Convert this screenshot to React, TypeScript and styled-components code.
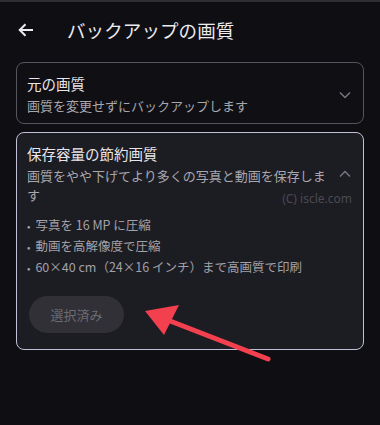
import React from 'react';
import styled, { createGlobalStyle } from 'styled-components';

const GlobalStyle = createGlobalStyle`
  html, body {
    margin: 0;
    padding: 0;
    background: #0e0e13;
  }
  body {
    font-family: "Noto Sans CJK JP", "Noto Sans", Roboto, sans-serif;
    color: #e6e4ea;
  }
`

const bullets = [
  '写真を 16 MP に圧縮',
  '動画を高解像度で圧縮',
  '60×40 cm（24×16 インチ）まで高画質で印刷',
]

const ChevronIcon: React.FC<{ up?: boolean }> = ({ up }) => (
  <svg width="12" height="8" viewBox="0 0 12 8">
    <path
      d={up ? 'M1 6.5 L6 1.5 L11 6.5' : 'M1 1.5 L6 6.5 L11 1.5'}
      fill="none"
      stroke="#77767e"
      strokeWidth="1.5"
    />
  </svg>
)

const App: React.FC = () => {
  return (
    <Page>
      <GlobalStyle />
      <Header>
        <BackButton>
          <svg width="16" height="14" viewBox="0 0 16 14">
            <path d="M15 7 H2 M7.5 1.2 L1.7 7 L7.5 12.8" fill="none" stroke="#ecebef" strokeWidth="2" />
          </svg>
        </BackButton>
        <Title>バックアップの画質</Title>
      </Header>

      <Options>
        <Card>
          <CardHead>
            <CardText>
              <CardTitle>元の画質</CardTitle>
              <CardSub>画質を変更せずにバックアップします</CardSub>
            </CardText>
            <ChevronBox>
              <ChevronIcon />
            </ChevronBox>
          </CardHead>
        </Card>

        <Card $selected>
          <CardHead>
            <CardText>
              <CardTitle>保存容量の節約画質</CardTitle>
              <CardSub>画質をやや下げてより多くの写真と動画を保存します</CardSub>
            </CardText>
            <ChevronBox>
              <ChevronIcon up />
            </ChevronBox>
          </CardHead>
          <Watermark>(C) iscle.com</Watermark>
          <BulletList>
            {bullets.map((b) => (
              <Bullet key={b}>{b}</Bullet>
            ))}
          </BulletList>
          <SelectedButton disabled>選択済み</SelectedButton>
        </Card>
      </Options>

      <Arrow width="380" height="425" viewBox="0 0 380 425">
        <line x1="268" y1="359" x2="165" y2="319" stroke="#f2404f" strokeWidth="5" strokeLinecap="round" />
        <polygon points="145,311 179,305 164,335" fill="#f2404f" />
      </Arrow>
    </Page>
  )
}

const Page = styled.div`
  position: relative;
  width: 380px;
  height: 425px;
  overflow: hidden;
  border-top: 2px solid #2e2e33;
  box-sizing: border-box;
`

const Header = styled.div`
  display: flex;
  align-items: center;
  height: 51px;
  padding-left: 18px;
  margin-top: 2px;
`

const BackButton = styled.div`
  display: flex;
  align-items: center;
  width: 49px;
`

const Title = styled.div`
  font-size: 18.5px;
  color: #ecebef;
  letter-spacing: 0.1px;
`

const Options = styled.div`
  display: flex;
  flex-direction: column;
  gap: 8px;
  margin: 7px 16px 0 16px;
`

const Card = styled.div<{ $selected?: boolean }>`
  position: relative;
  border: 1px solid ${(p) => (p.$selected ? '#c2c0d6' : '#56555d')};
  background: ${(p) => (p.$selected ? '#1c1c23' : '#0f0f14')};
  border-radius: 8px;
  padding: ${(p) => (p.$selected ? '11px 0 16px 10px' : '11px 0 8px 10px')};
`

const CardHead = styled.div`
  display: flex;
  align-items: center;
`

const CardText = styled.div`
  width: 300px;
  margin-right: 2px;
`

const CardTitle = styled.div`
  font-size: 14.5px;
  line-height: 20px;
  color: #e8e6ec;
`

const CardSub = styled.div`
  font-size: 13px;
  line-height: 19px;
  margin-top: 2px;
  color: #a9a7ae;
`

const ChevronBox = styled.div`
  display: flex;
  justify-content: center;
  width: 28px;
  margin-left: 2px;
`

const Watermark = styled.div`
  position: absolute;
  top: 57px;
  right: 11px;
  font-size: 12px;
  color: #4b4a52;
  font-family: "Noto Sans", sans-serif;
`

const BulletList = styled.ul`
  list-style: none;
  margin: 11px 0 0 0;
  padding: 0;
`

const Bullet = styled.li`
  font-size: 12.5px;
  line-height: 20px;
  color: #a3a1a8;
  &::before {
    content: '•';
    margin-right: 5px;
    font-size: 10px;
  }
`

const SelectedButton = styled.button`
  display: block;
  margin-top: 18px;
  margin-left: 2px;
  width: 95px;
  height: 37px;
  border: none;
  border-radius: 19px;
  background: #303036;
  color: #6c6b73;
  font-family: "Noto Sans CJK JP", sans-serif;
  font-size: 13px;
`

const Arrow = styled.svg`
  position: absolute;
  top: -2px;
  left: 0;
  pointer-events: none;
`

export default App
